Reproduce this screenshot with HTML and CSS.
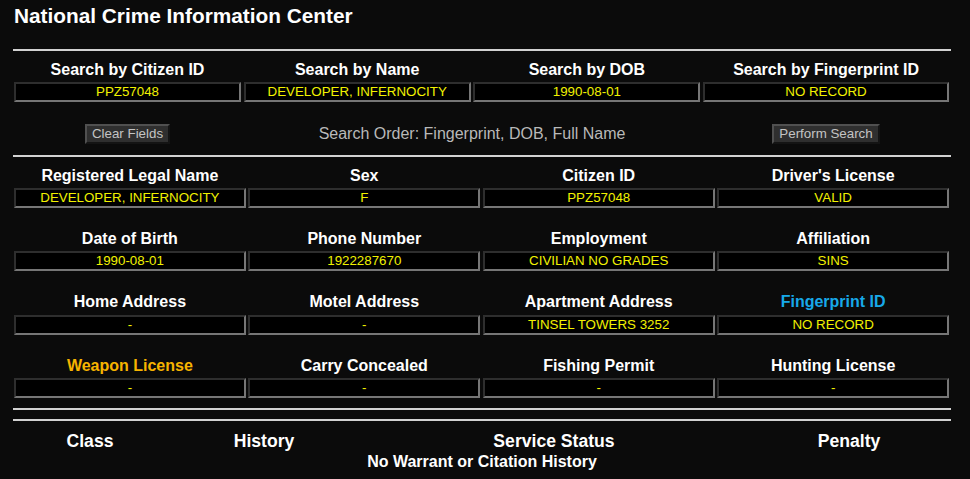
FILE: index.html
```html
<!DOCTYPE html>
<html lang="en">
<head>
<meta charset="utf-8">
<title>National Crime Information Center</title>
<link rel="stylesheet" href="styles.css">
</head>
<body>
<div class="page">
  <h1 class="title">National Crime Information Center</h1>
  <hr class="rule rule-top">

  <div class="search-grid">
    <div class="cell"><div class="label">Search by Citizen ID</div><div class="field">PPZ57048</div></div>
    <div class="cell"><div class="label">Search by Name</div><div class="field">DEVELOPER, INFERNOCITY</div></div>
    <div class="cell"><div class="label">Search by DOB</div><div class="field">1990-08-01</div></div>
    <div class="cell"><div class="label">Search by Fingerprint ID</div><div class="field">NO RECORD</div></div>
  </div>

  <div class="search-grid actions">
    <div class="action"><button class="btn" type="button">Clear Fields</button></div>
    <div class="order">Search Order: Fingerprint, DOB, Full Name</div>
    <div class="action"><button class="btn" type="button">Perform Search</button></div>
  </div>

  <hr class="rule rule-mid">

  <div class="info-grid">
    <div class="cell"><div class="label">Registered Legal Name</div><div class="field">DEVELOPER, INFERNOCITY</div></div>
    <div class="cell"><div class="label">Sex</div><div class="field">F</div></div>
    <div class="cell"><div class="label">Citizen ID</div><div class="field">PPZ57048</div></div>
    <div class="cell"><div class="label">Driver's License</div><div class="field">VALID</div></div>

    <div class="cell"><div class="label">Date of Birth</div><div class="field">1990-08-01</div></div>
    <div class="cell"><div class="label">Phone Number</div><div class="field">1922287670</div></div>
    <div class="cell"><div class="label">Employment</div><div class="field">CIVILIAN NO GRADES</div></div>
    <div class="cell"><div class="label">Affiliation</div><div class="field">SINS</div></div>

    <div class="cell"><div class="label">Home Address</div><div class="field">-</div></div>
    <div class="cell"><div class="label">Motel Address</div><div class="field">-</div></div>
    <div class="cell"><div class="label">Apartment Address</div><div class="field">TINSEL TOWERS 3252</div></div>
    <div class="cell"><div class="label label-blue">Fingerprint ID</div><div class="field">NO RECORD</div></div>

    <div class="cell"><div class="label label-orange">Weapon License</div><div class="field">-</div></div>
    <div class="cell"><div class="label">Carry Concealed</div><div class="field">-</div></div>
    <div class="cell"><div class="label">Fishing Permit</div><div class="field">-</div></div>
    <div class="cell"><div class="label">Hunting License</div><div class="field">-</div></div>
  </div>

  <hr class="rule rule-low">
  <hr class="rule rule-last">

  <div class="history-grid">
    <div class="th">Class</div>
    <div class="th">History</div>
    <div class="th">Service Status</div>
    <div class="th">Penalty</div>
    <div class="empty">No Warrant or Citation History</div>
  </div>
</div>
</body>
</html>
```

FILE: styles.css
```css
html, body {
  margin: 0;
  padding: 0;
  background: #0b0b0b;
}

body {
  font-family: "Liberation Sans", Arial, sans-serif;
  color: #ffffff;
}

.page {
  width: 938px;
  padding-left: 13px;
  padding-top: 4px;
}

.title {
  margin: 0 0 0 1px;
  font-size: 20.8px;
  line-height: 24px;
  font-weight: bold;
  color: #ffffff;
}

.rule {
  display: block;
  height: 0;
  margin: 0;
  border: 0;
  border-top: 2px solid #d2d2d2;
}

.rule-top { margin-top: 21px; }
.rule-mid { margin-top: 11px; }
.rule-low { margin-top: 10.5px; }
.rule-last { margin-top: 9px; }

.search-grid {
  display: grid;
  grid-template-columns: 227px 227px 227px 1fr;
  column-gap: 2.7px;
  margin: 9.8px 2px 0 1px;
}

.info-grid {
  display: grid;
  grid-template-columns: repeat(4, 1fr);
  column-gap: 2.7px;
  row-gap: 22.1px;
  margin: 10px 2px 0 1px;
}

.cell {
  display: flex;
  flex-direction: column;
  min-width: 0;
}

.label {
  font-size: 16px;
  line-height: 18.4px;
  font-weight: bold;
  text-align: center;
  white-space: nowrap;
  margin-bottom: 2.7px;
}

.label-blue { color: #17a9e9; }
.label-orange { color: #f7b400; }

.field {
  height: 16px;
  background: #000000;
  border: 2px solid;
  border-color: #2e2e2e #767676 #767676 #2e2e2e;
  color: #f2f200;
  font-size: 13.33px;
  line-height: 16px;
  text-align: center;
  white-space: nowrap;
  overflow: hidden;
}

.actions {
  margin-top: 22.2px;
  align-items: center;
}

.action {
  display: flex;
  justify-content: center;
}

.order {
  grid-column: span 2;
  text-align: center;
  font-size: 16px;
  color: #b9b9b9;
  white-space: nowrap;
}

.btn {
  font-family: "Liberation Sans", Arial, sans-serif;
  font-size: 13.33px;
  line-height: 14px;
  padding: 1px 5px;
  margin: 0;
  background: #2f2f2f;
  color: #c4c4c4;
  border: 2px solid;
  border-color: #505050 #141414 #141414 #505050;
  border-radius: 0;
  cursor: pointer;
}

.history-grid {
  display: grid;
  grid-template-columns: 154px 194px 386px 1fr;
  margin-top: 9.6px;
}

.th {
  font-size: 17.6px;
  line-height: 20.2px;
  font-weight: bold;
  text-align: center;
  white-space: nowrap;
}

.empty {
  grid-column: 1 / -1;
  margin-top: 2.4px;
  font-size: 16px;
  line-height: 18.4px;
  font-weight: bold;
  text-align: center;
}
```
